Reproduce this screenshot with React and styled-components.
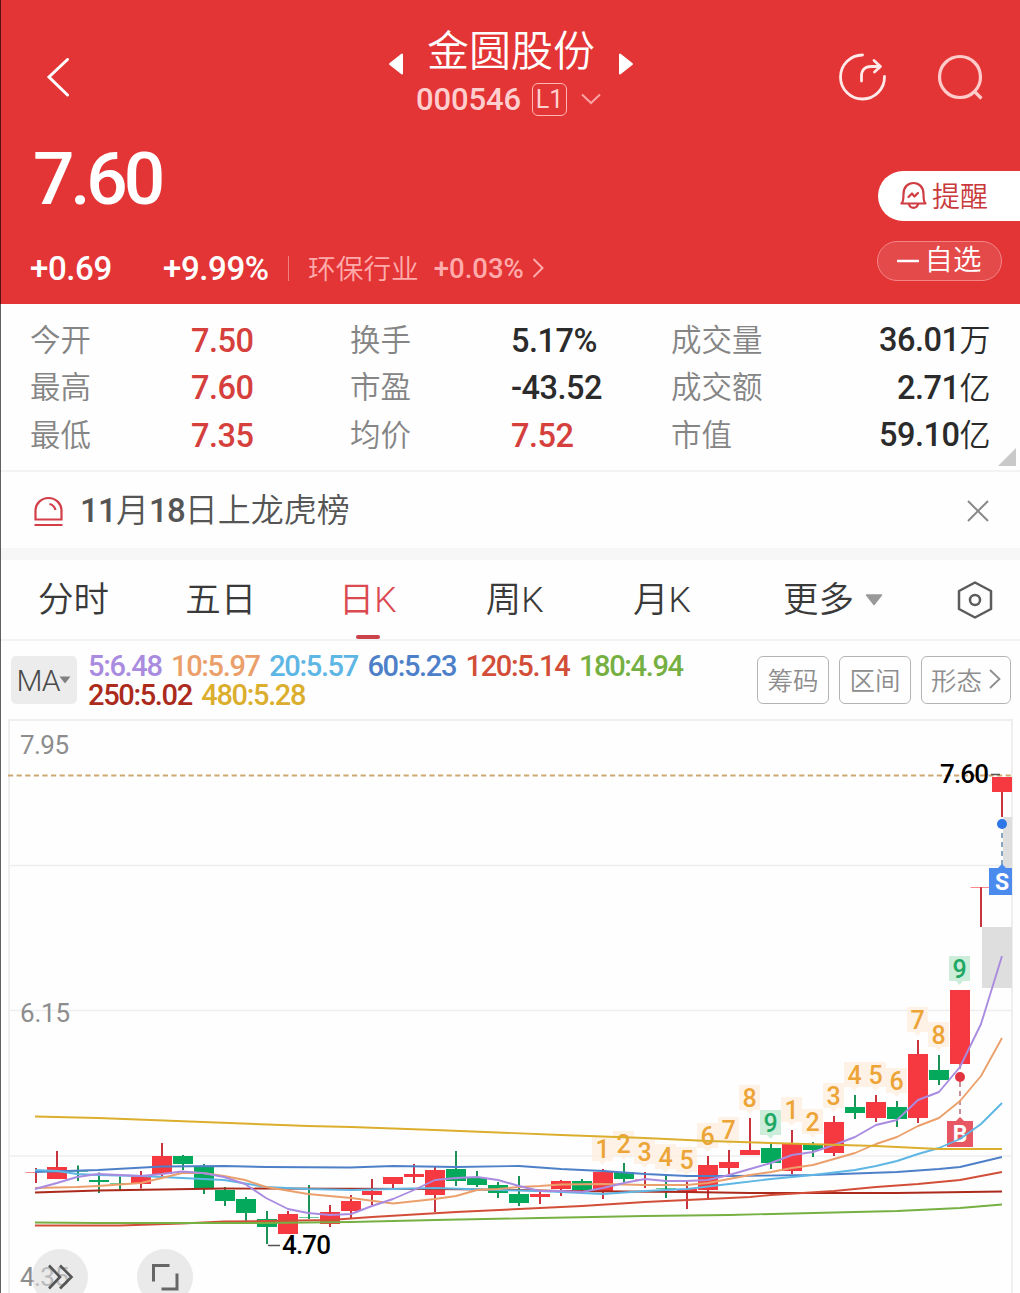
import React, { useState } from 'react';
import styled, { createGlobalStyle } from 'styled-components';

const GlobalStyle = createGlobalStyle`
  html {
    box-sizing: border-box;
  }
  *, *:before, *:after {
    box-sizing: inherit;
  }
  body {
    margin: 0;
    background: #fefefe;
    font-family: Roboto, 'Noto Sans CJK SC', sans-serif;
    font-weight: 350;
    color: #333;
  }
  button {
    font: inherit;
    color: inherit;
    background: none;
    border: 0;
    padding: 0;
    margin: 0;
  }
  svg {
    display: block;
    flex: none;
  }
`

const Page = styled.main`
  position: relative;
  width: 1020px;
  height: 1293px;
  overflow: hidden;
  background: #fefefe;
  &:before {
    content: '';
    position: absolute;
    z-index: 2;
    left: 0;
    top: 0;
    bottom: 0;
    width: 1px;
    background: rgba(0, 0, 0, 0.62);
  }
`

const Header = styled.header`
  height: 304px;
  background: #e33536;
  color: #fff;
`

const TopBar = styled.div`
  height: 124px;
  display: grid;
  grid-template-columns: 380px 262px 1fr;
`

const BackButton = styled.button`
  padding: 31px 0 0 46px;
  justify-self: start;
`

const TitleBlock = styled.div`
  display: flex;
  flex-direction: column;
  padding-top: 24px;
`

const TitleRow = styled.div`
  display: flex;
  align-items: center;
  justify-content: space-between;
  height: 56px;
  padding: 0 8px;
  & svg {
    margin-top: 24px;
  }
`

const StockName = styled.h1`
  margin: 0;
  font-size: 42px;
  line-height: 56px;
  font-weight: 350;
`

const CodeRow = styled.div`
  display: flex;
  align-items: center;
  height: 38px;
  padding-left: 36px;
  color: #ffcfcf;
`

const Code = styled.span`
  font-size: 31px;
  font-weight: 500;
  width: 116px;
  letter-spacing: -0.1px;
`

const Level = styled.span`
  width: 35px;
  height: 33px;
  border: 1.5px solid #ffb5b5;
  border-radius: 6px;
  font-size: 25px;
  line-height: 31px;
  font-weight: 400;
  text-align: center;
  margin-right: 14px;
`

const Actions = styled.div`
  display: flex;
  justify-content: flex-end;
  gap: 49px;
  padding: 52px 36px 0 0;
`

const Quote = styled.div`
  display: flex;
  justify-content: space-between;
  height: 180px;
`

const Price = styled.div`
  font-size: 73px;
  line-height: 84px;
  font-weight: 500;
  letter-spacing: -4.2px;
  padding: 13px 0 0 33px;
`

const ChangeRow = styled.div`
  display: flex;
  align-items: center;
  height: 40px;
  margin-top: 27px;
  padding-left: 30px;
`

const Change = styled.span`
  width: ${p => p.$width}px;
  font-size: 33px;
  font-weight: 500;
  letter-spacing: -0.4px;
`

const Sector = styled.span`
  display: flex;
  align-items: center;
  gap: 15px;
  height: 25px;
  padding-left: 19px;
  border-left: 1px solid #f08080;
  font-size: 27.7px;
  color: #ffabab;
  & span {
    margin-top: -3px;
  }
  & b {
    font-weight: 500;
    font-size: 27.5px;
    margin-right: -7px;
  }
`

const QuoteSide = styled.div`
  display: flex;
  flex-direction: column;
  align-items: flex-end;
  padding-top: 47px;
  gap: 20px;
`

const RemindButton = styled.button`
  display: flex;
  align-items: center;
  gap: 5px;
  width: 142px;
  height: 50px;
  padding: 0 0 2px 22px;
  border-radius: 25px 0 0 25px;
  background: #fff;
  color: #c9393b;
  font-size: 28px;
`

const WatchButton = styled.button`
  display: flex;
  align-items: center;
  justify-content: center;
  gap: 5px;
  width: 125px;
  height: 40px;
  margin-right: 18px;
  border: 1px solid #f38587;
  border-radius: 20px;
  background: #e54a4b;
  font-size: 28.5px;
  line-height: 38px;
`

const Stats = styled.section`
  position: relative;
  height: 168px;
  display: grid;
  grid-template-columns: 161px 159px 161px 160px 120px 1fr;
  grid-auto-rows: 47.5px;
  align-items: center;
  padding: 13px 30px 0;
  border-bottom: 2px solid #f3f3f3;
`

const StatLabel = styled.span`
  font-size: 30.5px;
  line-height: 44px;
  color: #858585;
`

const StatValue = styled.span`
  font-size: 32.5px;
  line-height: 44px;
  font-weight: 500;
  letter-spacing: -0.5px;
  color: ${p => p.$up ? '#d5403d' : '#2b2b2b'};
  text-align: ${p => p.$right ? 'right' : 'left'};
  & small {
    font-size: 31px;
    font-weight: 350;
  }
`

const Corner = styled.i`
  position: absolute;
  right: 4px;
  bottom: 4px;
  border: 9px solid #c9c9c9;
  border-top-color: transparent;
  border-left-color: transparent;
`

const Notice = styled.section`
  height: 76px;
  display: flex;
  align-items: center;
  padding: 2px 31px 0 33px;
  color: #555;
  & p {
    flex: 1;
    margin: 0 0 0 16px;
    font-size: 33px;
    line-height: 48px;
  }
  & b {
    font-weight: 500;
    font-size: 33px;
    letter-spacing: -0.8px;
  }
`

const Tabs = styled.nav`
  display: flex;
  height: 93px;
  padding-right: 27px;
  border-top: 12px solid #f7f7f7;
  border-bottom: 2px solid #f3f3f3;
`

const Tab = styled.button`
  position: relative;
  display: flex;
  align-items: center;
  justify-content: center;
  gap: 11px;
  width: ${p => p.$wide ? 195 : 147.1}px;
  font-size: 35.5px;
  line-height: 50px;
  color: ${p => p.$active ? '#db4a50' : '#3a3a3a'};
  &:after {
    content: '';
    display: ${p => p.$active ? 'block' : 'none'};
    position: absolute;
    left: 50%;
    bottom: 0;
    width: 24px;
    height: 4px;
    margin-left: -12px;
    border-radius: 2px;
    background: #cb434a;
  }
`

const GearButton = styled.button`
  margin-left: auto;
`

const Indicators = styled.section`
  display: flex;
  align-items: flex-start;
  height: 77px;
  padding: 15px 9px 0 11px;
`

const MaSelect = styled.button`
  display: flex;
  align-items: center;
  justify-content: center;
  width: 66px;
  height: 48px;
  border-radius: 5px;
  background: #ececec;
  color: #4a4a4a;
  font-size: 30px;
  letter-spacing: -1px;
`

const Legend = styled.div`
  flex: 1;
  display: flex;
  flex-wrap: wrap;
  column-gap: 9.5px;
  margin: -4px 20px 0 11px;
`

const LegendItem = styled.span`
  color: ${p => p.$color};
  font-size: 29px;
  line-height: 29px;
  font-weight: 500;
  letter-spacing: -1.35px;
`

const ToolButtons = styled.div`
  display: flex;
  gap: 10px;
`

const ToolButton = styled.button`
  display: flex;
  align-items: center;
  justify-content: center;
  gap: 7px;
  width: ${p => p.$wide ? 90 : 72}px;
  height: 48px;
  padding-bottom: 3px;
  border: 1.5px solid #b4b4b4;
  border-radius: 6px;
  font-size: 25.5px;
  color: #8d8d8d;
`

const ChartArea = styled.section`
  position: relative;
  height: 575px;
  & text {
    font-family: Roboto, sans-serif;
  }
`

const RoundButton = styled.button`
  position: absolute;
  left: ${p => p.$left}px;
  top: 531px;
  display: flex;
  align-items: center;
  justify-content: center;
  width: 56px;
  height: 56px;
  border-radius: 50%;
  background: rgba(218, 218, 218, 0.58);
`

const stats = [
  ['今开', '7.50', '', true], ['换手', '5.17%', '', false], ['成交量', '36.01', '万', false],
  ['最高', '7.60', '', true], ['市盈', '-43.52', '', false], ['成交额', '2.71', '亿', false],
  ['最低', '7.35', '', true], ['均价', '7.52', '', true], ['市值', '59.10', '亿', false],
]

const tabs = ['分时', '五日', '日K', '周K', '月K']

const averages = [
  { period: 250, value: '5.02', color: '#ab2a1c', points: '35,1192.5 98,1190.5 224,1188.5 435,1189 519,1190 561,1191 687,1192 750,1193 897,1193 1002,1191.5' },
  { period: 120, value: '5.14', color: '#d24e38', points: '35,1225.5 120,1225.5 182,1223.5 224,1221.5 266,1221 330,1220 372,1217 456,1212 519,1209 582,1206 645,1202 687,1200 750,1197 771,1195 834,1191 876,1187 918,1184 960,1180 1002,1172' },
  { period: 180, value: '4.94', color: '#76b043', points: '35,1222.5 98,1223 266,1223 351,1222 435,1220 540,1218 645,1216 729,1215 813,1213 897,1211 960,1208 1002,1204.5' },
  { period: 60, value: '5.23', color: '#4d80c8', points: '35,1172 98,1170 162,1166.5 224,1166 266,1167 350,1167.5 393,1166 456,1167 519,1166 561,1169 603,1171 645,1174 687,1176 729,1176 813,1175 897,1172 939,1169 960,1167 1002,1157' },
  { period: 20, value: '5.57', color: '#5db6e4', points: '35,1170 57,1171 77,1174 98,1175 141,1176 182,1178 224,1180 266,1187 308,1189 351,1190 393,1189 435,1188 498,1190 540,1191 561,1192 603,1194 645,1191 687,1189 729,1184 771,1179 813,1175 855,1170 876,1166 897,1161 918,1154 939,1148 960,1139 981,1124 1002,1103' },
  { period: 10, value: '5.97', color: '#eba06c', points: '35,1188 77,1187 98,1186 141,1183 162,1178 182,1173 203,1173 224,1176 245,1180 266,1187 308,1194 351,1198 393,1203.5 435,1199 456,1196 477,1190 498,1189 519,1187 540,1186 561,1184.5 603,1184 645,1185 687,1185 708,1183 729,1179 750,1175 771,1172 792,1168 813,1165 834,1159 855,1153 876,1144 897,1137 918,1126 939,1118 960,1101 981,1076 1002,1038' },
  { period: 5, value: '6.48', color: '#a98be0', points: '35,1189 57,1183 77,1177 98,1174 120,1175 141,1176 162,1174 182,1171.5 203,1173 224,1177 245,1184 266,1198 288,1209 308,1213 330,1215 351,1214 372,1206 393,1199 414,1190 435,1180 456,1178 477,1177 498,1180 519,1186 540,1191 561,1191 582,1192 603,1188 624,1183 645,1179 666,1181 687,1181 708,1180 729,1175 750,1169 771,1163 792,1155 813,1152 834,1145 855,1137 876,1125 897,1120 918,1100 939,1092 960,1067 981,1024 1002,956' },
  { period: 480, value: '5.28', color: '#dcae2e', points: '35,1116.5 98,1118 203,1122 308,1126 351,1127 435,1130 561,1135 645,1138 708,1141 771,1143 876,1146 939,1149 1002,1149' },
]

const legend = [...averages].sort((a, b) => a.period - b.period)

// [rising, high, body top, body bottom, low]
const candles = [
  [1, 1168, 1172, 1173, 1183], [1, 1151, 1167, 1179, 1179], [0, 1165.5, 1171, 1172, 1181],
  [0, 1172.5, 1180, 1182, 1193], [0, 1176.5, 1183, 1184, 1190], [1, 1171, 1176, 1184, 1188.5],
  [1, 1143, 1156, 1174, 1176], [0, 1155, 1156, 1164, 1170], [0, 1164, 1166, 1188, 1194],
  [0, 1187, 1190, 1201, 1206], [0, 1197, 1199, 1213, 1221], [0, 1211, 1219, 1227, 1244],
  [1, 1211, 1214, 1234, 1234], [0, 1185, 1217, 1218, 1219], [1, 1205, 1212, 1224, 1227],
  [1, 1195, 1201, 1211, 1218], [1, 1179, 1191, 1195, 1205], [1, 1177, 1177, 1184, 1190],
  [1, 1164, 1174, 1177, 1183], [1, 1167, 1170, 1195, 1212], [0, 1151, 1169, 1181, 1186],
  [0, 1171, 1178, 1185, 1187], [0, 1182, 1185, 1193, 1198], [0, 1176, 1194, 1203, 1206],
  [1, 1192, 1194, 1197, 1204], [1, 1180, 1181, 1189, 1196], [0, 1179, 1181, 1190, 1192],
  [1, 1169, 1172, 1192, 1199], [0, 1163, 1172, 1179, 1182], [1, 1172, 1179, 1180, 1188],
  [0, 1176, 1188, 1189, 1198], [1, 1181, 1189, 1192, 1209], [1, 1156, 1165, 1190, 1198],
  [1, 1150, 1162, 1168, 1174], [1, 1118, 1150, 1155, 1155], [0, 1143, 1148, 1163, 1169],
  [1, 1130, 1144, 1171, 1174], [0, 1142, 1144, 1150, 1157], [1, 1116, 1122, 1153, 1156],
  [0, 1095, 1107, 1113, 1119], [1, 1095, 1102, 1118, 1122], [0, 1101, 1107, 1119, 1127],
  [1, 1040, 1054, 1118, 1123], [0, 1055, 1070, 1080, 1085], [1, 990, 990, 1064, 1064],
  [1, 887, 887, 888, 927], [1, 777, 777, 792, 817],
]

// sequence counters above the bars: [bar index, centre y, number]
const counters = [
  [27, 1149, 1], [28, 1144, 2], [29, 1152, 3], [30, 1157, 4], [31, 1160, 5], [32, 1136, 6],
  [33, 1130, 7], [34, 1098, 8], [35, 1123, 9], [36, 1110, 1], [37, 1122, 2], [38, 1096, 3],
  [39, 1075, 4], [40, 1075, 5], [41, 1081, 6], [42, 1020, 7], [43, 1035, 8], [44, 969, 9],
]

const barX = i => 36 + i * 21

const Candle = ({ index, bar }) => {
  const [rising, high, top, bottom, low] = bar
  const x = barX(index)
  const thin = bottom - top <= 1
  const left = index === 0 || index === 45 ? x - 10.5 : x - 10
  return (
    <g>
      <rect x={x - 1} y={high} width="2" height={low - high} fill={rising ? '#c9333d' : '#1b9257'} />
      <rect
        x={left}
        y={top}
        width={index === 0 ? 11 : 20}
        height={bottom - top}
        fill={rising ? '#f63840' : '#05a95c'}
        opacity={thin ? 0.6 : 1}
      />
    </g>
  )
}

const Counter = ({ index, y, number }) => {
  const x = barX(index) - 0.5
  const done = number === 9
  return (
    <g>
      <path
        d={`M${x - 10.5} ${y - 13}h21v25h-7l-3.5 4l-3.5-4h-7z`}
        fill={done ? '#c4ead5' : '#fdf0e1'}
        opacity="0.85"
      />
      <text x={x} y={y + 9} fontSize="25" fontWeight="500" textAnchor="middle" fill={done ? '#1ea863' : '#eda437'}>
        {number}
      </text>
    </g>
  )
}

const KLineChart = () => (
  <svg width="1020" height="575" viewBox="0 718 1020 575">
    <g stroke="#eee" strokeWidth="1.5" fill="none">
      <path d="M9 865.5H1012M9 1010.5H1012M9 1156H1012" />
      <path d="M9 1293V720H1012V1293" strokeWidth="2" />
    </g>
    <rect x="1003" y="817" width="9" height="52" fill="#dedede" />
    <rect x="982" y="927" width="30" height="61" fill="#dedede" />
    <path d="M8 775.5H1012" stroke="#cfa871" strokeWidth="1.8" strokeDasharray="5.2 3.4" />
    {candles.map((bar, i) => <Candle key={i} index={i} bar={bar} />)}
    {counters.map(([i, y, n]) => <Counter key={i} index={i} y={y} number={n} />)}

    <path d="M947 1121h9l4-4l4 4h9v26h-26z" fill="#e2404d" opacity="0.88" />
    <text x="960" y="1142" fontSize="23" fontWeight="700" textAnchor="middle" fill="#fff">B</text>
    <path d="M960 1064V1118" stroke="#b5606b" strokeWidth="1.4" strokeDasharray="5 4" />
    <circle cx="960" cy="1077" r="5" fill="#e23340" />

    {averages.map(({ period, color, points }) => (
      <polyline key={period} points={points} fill="none" stroke={color} strokeWidth="1.9" strokeLinejoin="round" />
    ))}

    <path d="M1002 824V866" stroke="#5580a8" strokeWidth="1.4" strokeDasharray="5 4" />
    <circle cx="1002" cy="824" r="5" fill="#2f76e6" />
    <path d="M989 868h9l4-4l4 4h6v27h-23z" fill="#4c8bee" />
    <text x="1002" y="890" fontSize="23" fontWeight="700" textAnchor="middle" fill="#fff">S</text>

    <text x="940" y="783" fontSize="26" fontWeight="500" textLength="49" fill="#000">7.60</text>
    <path d="M991 774.5h9M268 1245.5h12" stroke="#555" strokeWidth="1.3" />
    <text x="282" y="1254" fontSize="26" fontWeight="500" textLength="49" fill="#000">4.70</text>
    <g fontSize="26" fill="#8d8d8d" fontWeight="450">
      <text x="20" y="754" textLength="49">7.95</text>
      <text x="20" y="1022" textLength="50">6.15</text>
      <text x="20" y="1286" textLength="49">4.35</text>
    </g>
  </svg>
)

const App = () => {
  const [active, setActive] = useState('日K')

  return (
    <Page>
      <GlobalStyle />
      <Header>
        <TopBar>
          <BackButton>
            <svg width="24" height="40" viewBox="0 0 24 40" fill="none" stroke="#fff" strokeWidth="3" strokeLinecap="round">
              <path d="M21.5 1.5L3 19L21.5 37" />
            </svg>
          </BackButton>
          <TitleBlock>
            <TitleRow>
              <svg width="16" height="22" viewBox="0 0 16 22" fill="#fff" stroke="#fff" strokeWidth="2" strokeLinejoin="round">
                <path d="M14 1.5V20.5L2 11z" />
              </svg>
              <StockName>金圆股份</StockName>
              <svg width="16" height="22" viewBox="0 0 16 22" fill="#fff" stroke="#fff" strokeWidth="2" strokeLinejoin="round">
                <path d="M2 1.5V20.5L14 11z" />
              </svg>
            </TitleRow>
            <CodeRow>
              <Code>000546</Code>
              <Level>L1</Level>
              <svg width="20" height="12" viewBox="0 0 20 12" fill="none" stroke="#f9a3a3" strokeWidth="2">
                <path d="M1 1.5L10 10L19 1.5" />
              </svg>
            </CodeRow>
          </TitleBlock>
          <Actions>
            <svg width="50" height="50" viewBox="0 0 50 50" fill="none" stroke="#ffe9e9" strokeWidth="2.8" strokeLinecap="round" strokeLinejoin="round">
              <path d="M25.5 3A22 22 0 1 0 47.5 24.5" />
              <path d="M24.5 29V24C24.5 18 28 14.5 34 14.5H42M37 8.5L43.5 14.5L37.5 20" />
            </svg>
            <svg width="48" height="50" viewBox="0 0 48 50" fill="none" stroke="#ffcaca" strokeWidth="3.2">
              <circle cx="24" cy="25" r="20.5" />
              <path d="M38 39L45.5 46.5" />
            </svg>
          </Actions>
        </TopBar>
        <Quote>
          <div>
            <Price>7.60</Price>
            <ChangeRow>
              <Change $width={133}>+0.69</Change>
              <Change $width={125}>+9.99%</Change>
              <Sector>
                <span>环保行业</span>
                <b>+0.03%</b>
                <svg width="12" height="20" viewBox="0 0 12 20" fill="none" stroke="#ffabab" strokeWidth="2">
                  <path d="M1.5 1L10.5 10L1.5 19" />
                </svg>
              </Sector>
            </ChangeRow>
          </div>
          <QuoteSide>
            <RemindButton>
              <svg width="27" height="28" viewBox="0 0 27 28" fill="none" stroke="#cf3c42" strokeWidth="2.2" strokeLinecap="round" strokeLinejoin="round">
                <path d="M1.5 22.5H25.5C23.5 21 23.5 18 23.5 13C23.5 6 19 2 13.5 2S3.500 6 3.500 13C3.500 18 3.500 21 1.500 22.500z" />
                <path d="M9 23.500C10.500 28 16.500 28 18 23.500" />
                <path d="M8.500 16L12 12.500L14.500 15.500L18 12" />
              </svg>
              提醒
            </RemindButton>
            <WatchButton>
              <svg width="22" height="4" viewBox="0 0 22 4"><path d="M0 2H22" stroke="#fff" strokeWidth="2.5" /></svg>
              自选
            </WatchButton>
          </QuoteSide>
        </Quote>
      </Header>

      <Stats>
        {stats.map(([label, value, unit, up], i) => (
          <React.Fragment key={label}>
            <StatLabel>{label}</StatLabel>
            <StatValue $up={up} $right={i % 3 === 2}>{value}{unit && <small>{unit}</small>}</StatValue>
          </React.Fragment>
        ))}
        <Corner />
      </Stats>

      <Notice>
        <svg width="31" height="31" viewBox="0 0 31 31" fill="none" stroke="#d23f48" strokeWidth="2.2">
          <path d="M2.5 23.5V14.5A13 12.5 0 0 1 28.5 14.5V23.5zM1.5 29H29.5" />
          <path d="M16.5 8C19.5 8.5 21.5 10.5 22.5 14" />
        </svg>
        <p><b>11</b>月<b>18</b>日上龙虎榜</p>
        <svg width="22" height="22" viewBox="0 0 22 22" stroke="#8a8a8a" strokeWidth="2">
          <path d="M1 1L21 21M21 1L1 21" />
        </svg>
      </Notice>

      <Tabs>
        {tabs.map(tab => (
          <Tab key={tab} $active={tab === active} onClick={() => setActive(tab)}>{tab}</Tab>
        ))}
        <Tab $wide>
          更多
          <svg width="18" height="12" viewBox="0 0 18 12"><path d="M1.5 1H16.5L9 10.5z" fill="#999" stroke="#999" strokeWidth="1.5" strokeLinejoin="round" /></svg>
        </Tab>
        <GearButton>
          <svg width="36" height="38" viewBox="0 0 36 38" fill="none" stroke="#5c5c5c" strokeWidth="2.5" strokeLinejoin="round">
            <path d="M18 1.5L34 10V28L18 36.5L2 28V10z" />
            <circle cx="18" cy="19" r="5" />
          </svg>
        </GearButton>
      </Tabs>

      <Indicators>
        <MaSelect>
          <span>MA</span>
          <svg width="12" height="8" viewBox="0 0 12 8"><path d="M0.5 0.5H11.5L6 7.5z" fill="#808080" /></svg>
        </MaSelect>
        <Legend>
          {legend.map(({ period, value, color }) => (
            <LegendItem key={period} $color={color}>{`${period}:${value}`}</LegendItem>
          ))}
        </Legend>
        <ToolButtons>
          <ToolButton>筹码</ToolButton>
          <ToolButton>区间</ToolButton>
          <ToolButton $wide>
            形态
            <svg width="12" height="20" viewBox="0 0 12 20" fill="none" stroke="#8d8d8d" strokeWidth="1.8"><path d="M1 1L10.5 10L1 19" /></svg>
          </ToolButton>
        </ToolButtons>
      </Indicators>

      <ChartArea>
        <KLineChart />
        <RoundButton $left={32}>
          <svg width="28" height="26" viewBox="0 0 28 26" fill="none" stroke="#555" strokeWidth="2.6">
            <path d="M3 1.5L14 13L3 24.5M14 1.5L25.5 13L14 24.5" />
          </svg>
        </RoundButton>
        <RoundButton $left={137}>
          <svg width="28" height="28" viewBox="0 0 28 28" fill="none" stroke="#666" strokeWidth="3">
            <path d="M2.5 18.5V2.5H18.5M26 10.5V26H10.5" />
          </svg>
        </RoundButton>
      </ChartArea>
    </Page>
  )
}

export default App
